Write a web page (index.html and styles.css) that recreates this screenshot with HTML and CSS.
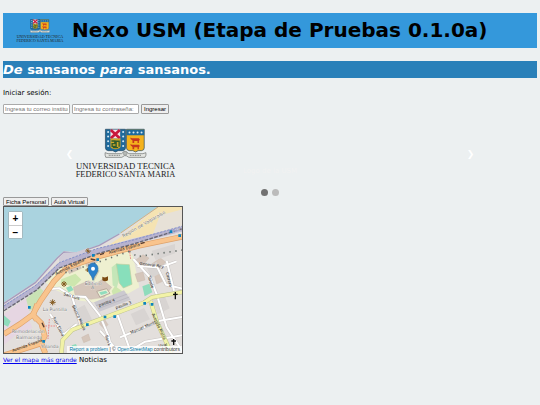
FILE: index.html
```html
<!DOCTYPE html>
<html lang="es">
<head>
    <meta charset="UTF-8">
    <meta name="viewport" content="width=device-width, initial-scale=1.0">
    <title>Nexo USM</title>
    <link rel="stylesheet" href="styles.css">
</head>
<body>
    <svg class="defs" width="0" height="0" aria-hidden="true">
        <symbol id="logo-usm" viewBox="44 28 302 152">
            <path d="M135 30h60v56q0 7-8 8h-14l-8 4-8-4h-14q-8-1-8-8z" fill="#1e6a9c" stroke="#24455c" stroke-width="2"/>
            <path d="M150 31h29v27h-29z" fill="#f3e6ea"/>
            <path d="M151 32l27 25M178 32l-27 25" stroke="#c9183c" stroke-width="8"/>
            <path d="M150 58h30v24q0 5-15 8-15-3-15-8z" fill="#d2a72b"/>
            <path d="M153 65h10v8h-8v8h12v-15h9v16M157 85h16" fill="none" stroke="#2f5b2a" stroke-width="4"/>
            <g fill="#d7e8f2">
                <circle cx="143" cy="38" r="3"/><circle cx="143" cy="52" r="3"/><circle cx="143" cy="66" r="3"/><circle cx="143" cy="80" r="3"/>
                <circle cx="188" cy="38" r="3"/><circle cx="188" cy="52" r="3"/><circle cx="188" cy="66" r="3"/><circle cx="188" cy="80" r="3"/>
            </g>
            <path d="M198 30h53v56q0 7-8 8h-10l-8 4-8-4h-11q-8-1-8-8z" fill="#f4b21d" stroke="#24455c" stroke-width="2"/>
            <path d="M198 31h53v17h-53z" fill="#1e6a9c"/>
            <g fill="#d7e8f2"><circle cx="207" cy="40" r="3"/><circle cx="219" cy="40" r="3"/><circle cx="231" cy="40" r="3"/><circle cx="243" cy="40" r="3"/></g>
            <path d="M210 55l4 2h21l3 4-3 4v6h-4v-6h-10v6h-5v-7l-6-5zM210 74l4 2h21l3 4-3 4v6h-4v-6h-10v6h-5v-7l-6-5z" fill="#c8381d"/>
            <path d="M134 100q-1 8 2 14h48l8-5h5l8 5h48q5-6 3-14l-9 3h-42l-8-6h-7l-7 6h-40z" fill="#e4e6e2" stroke="#6a6e6c" stroke-width="2"/>
            <circle cx="194" cy="102" r="6" fill="#b5b9b5" stroke="#6a6e6c"/>
            <path d="M145 108h35M208 108h34" stroke="#8b8d8a" stroke-width="4" stroke-dasharray="3 2"/>
            <text x="195" y="149" class="logo-text" font-size="26">UNIVERSIDAD TECNICA</text>
            <text x="195" y="174" class="logo-text" font-size="25">FEDERICO SANTA MARIA</text>
        </symbol>
    </svg>

    <header class="title-bar">
        <svg class="title-logo" role="img" aria-label="Logo USM"><use href="#logo-usm"/></svg>
        <h1>Nexo USM (Etapa de Pruebas 0.1.0a)</h1>
    </header>
    <h2><em>De</em> sansanos <em>para</em> sansanos.</h2>

    <p class="login-title">Iniciar sesión:</p>
    <form class="login">
        <input type="email" name="correo" aria-label="Correo institucional" placeholder="Ingresa tu correo institucional:">
        <input type="password" name="clave" aria-label="Contraseña" placeholder="Ingresa tu contraseña:">
        <button type="submit">Ingresar</button>
    </form>

    <div class="slideshow">
        <button type="button" class="arrow" aria-label="Anterior">&#10094;</button>
        <svg class="slide-logo" role="img" aria-label="Logo USM"><use href="#logo-usm"/></svg>
        <button type="button" class="arrow next" aria-label="Siguiente">&#10095;</button>
        <div class="caption">Logo de la USM</div>
    </div>
    <div class="dots">
        <button type="button" class="dot active" aria-label="Imagen 1"></button>
        <button type="button" class="dot" aria-label="Imagen 2"></button>
    </div>

    <nav class="links">
        <button type="button">Ficha Personal</button>
        <button type="button">Aula Virtual</button>
    </nav>

    <div class="map">
        <svg class="map-tiles" viewBox="12 9 534 438" preserveAspectRatio="xMidYMid slice" role="img" aria-label="Mapa">
            <path d="M0 0h560v460H0z" fill="#e3dfdc"/>
            <!-- zonas -->
            <path d="M130 230L180 188 290 150 384 128 400 160 418 250 330 300 240 290 160 255z" fill="#eef0d0"/>
            <path d="M12 330l66-48 30 10-26 40 15 40-50 22-35 28z" fill="#e6d6e2"/>
            <path d="M78 285l40-35 12 10-20 50-22 10z" fill="#c9e2b5"/>
            <path d="M184 226l42-17 18 18-22 21-40-10zM345 246l28 20-30 20-8-25z" fill="#cde6ae"/>
            <path d="M335 190l15-12 20 8-20 66-12-8z" fill="#c5e6b8"/>
            <path d="M349 180l39 2 8 59-26 11-12-15z" fill="#88dfbb" stroke="#bdcf9f" stroke-width="2"/>
            <path d="M198 251l15-6 8 13-15 7zM427 247l21-8 9 26-23 12zM12 334l20 18-8 16-12-6zM215 424l13-4 5 12-14 8z" fill="#8fdcbc"/>
            <path d="M282 295l90-36 20 28-94 36z" fill="#cbc9cf"/>
            <path d="M288 305l94-35M294 314l94-35" stroke="#b3b1b9" stroke-width="2"/>
            <!-- edificios -->
            <g fill="#d5c6bb" stroke="#c2b0a4">
                <path d="M220 250l45-20 22 10 20-14 28 24-22 30-40 6-48-14zM200 195l38-14 6 12-36 16zM255 176l32-12 6 10-33 14z"/>
                <path d="M404 170l25-18 18 10-20 24zM405 210l24-6 6 24-22 6zM455 180l26-18 16 12-18 20zM462 210l20-4 6 26-18 8zM245 400l20-10 6 18-20 8zM310 340l14 22-12 12-14-14z"/>
            </g>
            <path d="M290 262l30-8 10 14-30 12z" fill="#e9efd5" stroke="#b9a99c" stroke-width="3"/>
            <path d="M298 265l20-5 5 7-20 6z" fill="#90dcbd"/>
            <path d="M440 190l30-16 14 32-30 16zM455 285l38-12 16 40-36 18zM220 320l34-18 22 45-40 14zM392 330l40-18 18 34-42 18zM455 140l70-20v28l-58 20z" fill="#d8d4d2"/>
            <!-- calles -->
            <g fill="none" stroke="#c8c4c2" stroke-width="9">
                <path d="M150 255l28-2 38 24 40 2 44 56 26 62 14 60M216 277l28 95M150 330l46 70M350 325l46 130M300 380l70 80M360 400l120-50 70-12M470 270l30 100 50 76M400 165l50 55 26 66M412 186l60 4 26 52 50 12M480 190l50-18M500 170l22 90M365 455l70-42 114-20M230 360l-40 32"/>
            </g>
            <g fill="none" stroke="#fff" stroke-width="6">
                <path d="M150 255l28-2 38 24 40 2 44 56 26 62 14 60M216 277l28 95M150 330l46 70M350 325l46 130M300 380l70 80M360 400l120-50 70-12M470 270l30 100 50 76M400 165l50 55 26 66M412 186l60 4 26 52 50 12M480 190l50-18M500 170l22 90M365 455l70-42 114-20M230 360l-40 32"/>
            </g>
            <g fill="none" stroke="#bcc18a" stroke-width="13"><path d="M184 450l4-42 28-30 46-18 170-64 24-16 92-16M452 292l18 60 44 96"/></g>
            <g fill="none" stroke="#f2f2a7" stroke-width="10"><path d="M184 450l4-42 28-30 46-18 170-64 24-16 92-16M452 292l18 60 44 96"/></g>
            <!-- mar y playa -->
            <path d="M12 9h462l-112 78-64 36-70 22-36-4-20 18-66 74-94 62z" fill="#aad3df"/>
            <path d="M474 9h74v60l-82 22-70 12-72 22 50-34z" fill="#f5e3b2"/>
            <path d="M480 34l68-18v54l-90 22z" fill="#e7e1d7"/>
            <path d="M12 298l94-62 66-74 20-18 36 4 70-24 60-34" fill="none" stroke="#a69bbd" stroke-width="4"/>
            <path d="M176 162l18-16 36-1 34-14 10 14-94 38z" fill="#d1ccd8"/>
            <path d="M474 9L362 87" stroke="#d0b184" stroke-width="3"/>
            <!-- avenida y tren -->
            <g fill="none" stroke="#dea26b" stroke-width="17"><path d="M548 98l-134 28-114 30-98 34-40 42-40 58-24 42-38 28-48 30M98 332l26 26 10 38-10 22-112 36M124 418l12 30M112 300l-12 32 10 16"/></g>
            <g fill="none" stroke="#f9c48d" stroke-width="13"><path d="M548 98l-134 28-114 30-98 34-40 42-40 58-24 42-38 28-48 30M98 332l26 26 10 38-10 22-112 36M124 418l12 30M112 300l-12 32 10 16"/></g>
            <path d="M12 312l98-62 68-66 112-42 110-30 148-38" fill="none" stroke="#b7b3cf" stroke-width="15"/>
            <path d="M12 306l98-64 68-66 112-42 110-26 148-42" fill="none" stroke="#8490ca" stroke-width="3" stroke-dasharray="7 4"/>
            <path d="M12 320l98-62 68-66 112-42 110-30 148-46" fill="none" stroke="#686772" stroke-width="4" stroke-dasharray="11 4"/>
            <path d="M196 206l94-30 98-34M388 142l24 16 136-20" fill="none" stroke="#69716d" stroke-width="5" stroke-dasharray="4 14"/>
            <path d="M388 136l4 30M136 366h34M148 345l-4 60" stroke="#ec8787" stroke-width="3" stroke-dasharray="5 3"/>
            <path d="M312 148l-12 4M422 119l12-4M126 356l6 14M272 165l14 3" stroke="#553c31" stroke-width="4"/>
            <!-- nombres -->
            <g class="street">
                <text transform="translate(328 150) rotate(-15)">Avenida España</text>
                <text transform="translate(168 214) rotate(-27)">Avenida España</text>
                <text transform="translate(38 444) rotate(-20)">Avenida España</text>
                <text transform="translate(393 390) rotate(-23)">Manuel Montt</text>
                <text transform="translate(455 330) rotate(65)">Avenida Matta</text>
                <text transform="translate(298 308) rotate(-19)">pasillo 4</text>
                <text transform="translate(348 315) rotate(-19)">pasillo 3</text>
                <text transform="translate(190 273) rotate(17)">San Luis</text>
                <text transform="translate(216 306) rotate(65)">Blanca Maura</text>
                <text transform="translate(158 342) rotate(63)">Juan Elena</text>
                <text transform="translate(315 395) rotate(72)">San L</text>
                <text transform="translate(418 182) rotate(8)">General Rey</text>
                <text transform="translate(443 217) rotate(72)">Toledo</text>
                <text transform="translate(497 206) rotate(75)">Carrera</text>
                <text transform="translate(476 430) rotate(-10)">Uval</text>
            </g>
            <g class="place">
                <text x="128" y="322">La Puntilla</text>
                <text x="35" y="388">Remodelación</text>
                <text x="48" y="406">Balmaceda</text>
                <text x="122" y="433">Yolanda</text>
                <text x="254" y="242">Edificio</text>
                <text x="273" y="256">A</text>
                <text transform="translate(370 101) rotate(-30)">Región de Valparaíso</text>
                <text x="518" y="84" class="station">Port</text>
            </g>
            <g fill="#0b84bf">
                <path d="M276 150h8v8h-8zM289 163h8v8h-8zM509 79h8v8h-8zM535 91h8v8h-8zM84 306h8v8h-8zM127 408h8v8h-8zM258 358h8v8h-8zM311 335h8v8h-8zM340 334h8v8h-8zM430 294h8v8h-8zM452 297h8v8h-8z"/>
            </g>
            <g stroke="#845b21" stroke-width="3">
                <path d="M183 240h18M192 231v18M186 234l12 12M198 234l-12 12M149 295h18M158 286v18M152 289l12 12M164 289l-12 12M256 141h16M264 133v16M259 136l10 10M256 198h12M262 192v12"/>
            </g>
            <path d="M307 218q9 5 17-1v12q-8 6-17 0z" fill="#7a4a12"/>
            <path d="M526 264v22M519 271h14M521 405v18M514 411h14" stroke="#111" stroke-width="4"/>
            <!-- marcador -->
            <path d="M280 229l16-30" stroke="#777" stroke-width="6" opacity=".35"/>
            <path d="M279 229q-3-12-10-20-5-7-5-15a15 17 0 0 1 30 0q0 8-5 15-7 8-10 20z" fill="#2a81cb" stroke="#226ca8" stroke-width="2"/>
            <circle cx="279" cy="194" r="6" fill="#fff"/>
        </svg>
        <div class="zoom">
            <button type="button" aria-label="Acercar">+</button>
            <button type="button" aria-label="Alejar">−</button>
        </div>
        <div class="attribution"><a href="#">Report a problem</a> | © <a href="#">OpenStreetMap</a> contributors</div>
    </div>
    <div class="below-map"><a href="#">Ver el mapa más grande</a> Noticias</div>
</body>
</html>
```

FILE: styles.css
```css
body {
    margin: 13px 3px 3px;
    background-color: #ecf0f1;
    color: #000;
    font-family: Verdana, "DejaVu Sans", sans-serif;
    font-size: 7px;
    line-height: 9px;
}

.defs {
    position: absolute;
}

.logo-text {
    font-family: "Liberation Serif", serif;
    text-anchor: middle;
    fill: #222;
}

.title-bar {
    display: flex;
    align-items: center;
    gap: 8px;
    padding: 5px 13px;
    background-color: #3498db;
}

.title-logo {
    width: 48px;
    height: 24px;
}

h1 {
    margin: 0;
    font-size: 20px;
    line-height: 25px;
}

h2 {
    margin: 13px 0 11px;
    background-color: #2980b9;
    color: white;
    font-size: 13px;
    line-height: 17px;
}

.login-title {
    margin: 0 0 6px;
}

.login, .links {
    display: flex;
    gap: 2px;
}

.login input {
    box-sizing: border-box;
    width: 67px;
    height: 10px;
    padding: 0 1px;
    border: 1px solid #aaa;
    border-radius: 1px;
    background-color: white;
    font: 6px "Liberation Sans", sans-serif;
}

.login input::placeholder {
    color: #757575;
}

.login button, .links button {
    height: 10px;
    padding: 0 2px;
    border: 1px solid #999;
    border-radius: 1px;
    background-color: #efefef;
    color: #000;
    font: 6px "Liberation Sans", sans-serif;
}

.links button {
    height: 9px;
}

.slideshow {
    position: relative;
    display: flex;
    align-items: center;
    max-width: 412px;
    margin: 14px auto 0;
}

.slide-logo {
    width: 101px;
    height: 52px;
}

.arrow {
    width: 11px;
    padding: 0;
    border: none;
    background: none;
    color: white;
    font: bold 9px "DejaVu Sans", sans-serif;
    cursor: pointer;
}

.next {
    margin-left: auto;
}

.caption {
    position: absolute;
    right: 0;
    bottom: 4px;
    left: 0;
    width: fit-content;
    margin: 0 auto;
    color: #f2f2f2;
}

.dots {
    display: flex;
    justify-content: center;
    gap: 4px;
    margin: 9px 0 1px;
}

.dot {
    width: 7px;
    height: 7px;
    padding: 0;
    border: none;
    border-radius: 50%;
    background-color: #bbb;
}

.active {
    background-color: #717171;
}

.map {
    position: relative;
    box-sizing: border-box;
    width: 180px;
    border: 1px solid #555;
    overflow: hidden;
}

.map-tiles {
    display: block;
    width: 100%;
    height: auto;
}

.street {
    font: 12px "DejaVu Sans", sans-serif;
    fill: #222;
}

.place {
    font: 14px "DejaVu Sans", sans-serif;
    fill: #777;
    stroke: #fff;
    stroke-width: 1px;
    paint-order: stroke;
}

.station {
    font-size: 11px;
    fill: #4d50a0;
}

.zoom {
    position: absolute;
    top: 4px;
    left: 4px;
    display: flex;
    flex-direction: column;
    border: 1px solid #a5b9bf;
    border-radius: 2px;
}

.zoom button {
    width: 13px;
    height: 13px;
    padding: 0;
    border: none;
    background-color: white;
    color: #000;
    font: bold 10px/13px "Liberation Sans", sans-serif;
}

.zoom button + button {
    border-top: 1px solid #ccc;
}

.attribution {
    position: absolute;
    right: 0;
    bottom: 0;
    padding: 0 2px;
    background-color: rgba(255, 255, 255, 0.8);
    color: #333;
    font: 5px/7px "Liberation Sans", sans-serif;
}

.attribution a {
    color: #0078a8;
    text-decoration: none;
}

.below-map {
    margin-top: 1px;
}

.below-map a {
    color: #0000ee;
    font-size: 6px;
}
```
